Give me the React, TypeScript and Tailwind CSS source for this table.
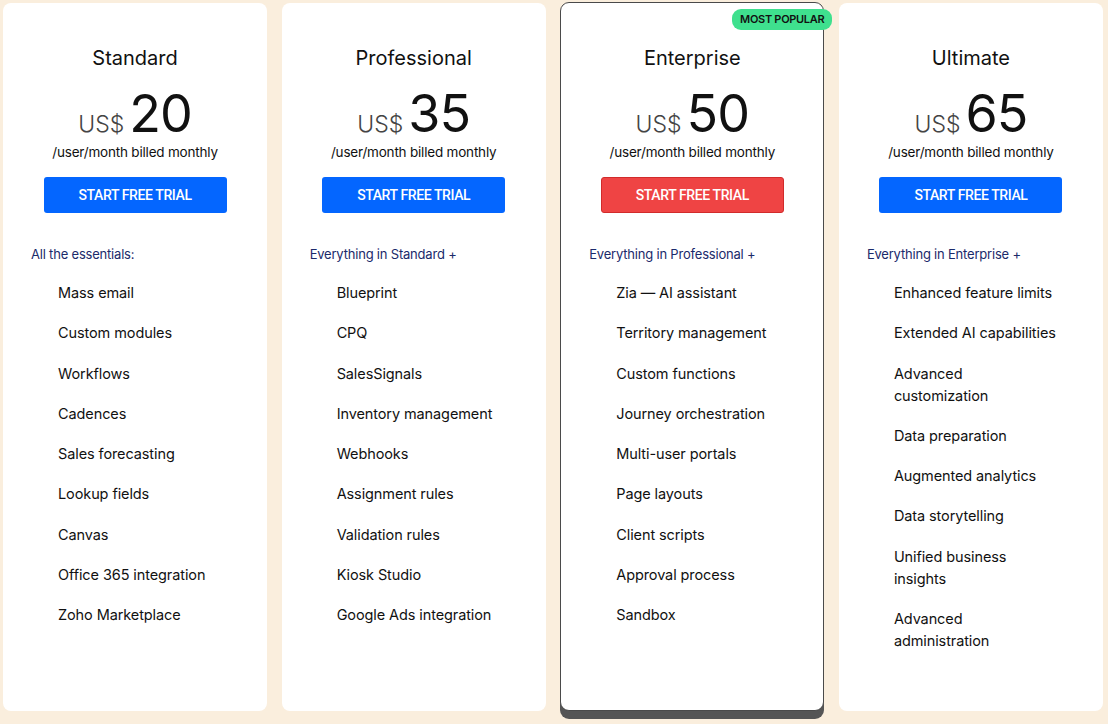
import React from 'react';

interface Plan {
  name: string;
  price: string;
  intro: string;
  features: string[];
  featured?: boolean;
}

const plans: Plan[] = [
  {
    name: 'Standard',
    price: '20',
    intro: 'All the essentials:',
    features: [
      'Mass email',
      'Custom modules',
      'Workflows',
      'Cadences',
      'Sales forecasting',
      'Lookup fields',
      'Canvas',
      'Office 365 integration',
      'Zoho Marketplace',
    ],
  },
  {
    name: 'Professional',
    price: '35',
    intro: 'Everything in Standard +',
    features: [
      'Blueprint',
      'CPQ',
      'SalesSignals',
      'Inventory management',
      'Webhooks',
      'Assignment rules',
      'Validation rules',
      'Kiosk Studio',
      'Google Ads integration',
    ],
  },
  {
    name: 'Enterprise',
    price: '50',
    intro: 'Everything in Professional +',
    featured: true,
    features: [
      'Zia — AI assistant',
      'Territory management',
      'Custom functions',
      'Journey orchestration',
      'Multi-user portals',
      'Page layouts',
      'Client scripts',
      'Approval process',
      'Sandbox',
    ],
  },
  {
    name: 'Ultimate',
    price: '65',
    intro: 'Everything in Enterprise +',
    features: [
      'Enhanced feature limits',
      'Extended AI capabilities',
      'Advanced\ncustomization',
      'Data preparation',
      'Augmented analytics',
      'Data storytelling',
      'Unified business\ninsights',
      'Advanced\nadministration',
    ],
  },
];

const PlanCard: React.FC<{ plan: Plan }> = ({ plan }) => {
  const featured = !!plan.featured;
  return (
    <div
      className={
        featured
          ? 'relative mt-[-1px] h-[709px] rounded-[9px] border border-[#4a4a4a] bg-white shadow-[0_8px_0_0_#555555] flex flex-col items-center pt-[42px]'
          : 'relative h-[708px] rounded-[8px] bg-white flex flex-col items-center pt-[42px]'
      }
    >
      {featured && (
        <div className="absolute top-[6px] right-[-9px] h-[21px] px-[8px] rounded-[9px] bg-[#3fe08e] flex items-center text-[11px] font-semibold tracking-[-0.3px] text-[#111]">
          MOST POPULAR
        </div>
      )}

      {/* Plan title + price */}
      <h2 className="text-[20px] leading-[26px] font-normal text-[#111]">{plan.name}</h2>
      <div className="mt-[14px] flex items-baseline h-[58px]">
        <span className="text-[23px] font-light text-[#444] mr-[5px]">US$</span>
        <span className="text-[52px] leading-[58px] font-normal text-[#111] tracking-[-1px]">{plan.price}</span>
      </div>
      <div className="mt-0 text-[13.5px] leading-[18px] text-[#111] tracking-[-0.2px]">
        /user/month billed monthly
      </div>
      <button
        className={
          featured
            ? 'mt-[16px] w-[183px] h-[36px] rounded-[3px] bg-[#ef4444] border border-[#d12b2b] text-white text-[14px] font-medium font-["Roboto"] tracking-[-0.4px]'
            : 'mt-[16px] w-[183px] h-[36px] rounded-[3px] bg-[#0466ff] text-white text-[14px] font-medium font-["Roboto"] tracking-[-0.4px]'
        }
      >
        START FREE TRIAL
      </button>

      {/* Features */}
      <div className="self-stretch px-[28px] mt-[32px]">
        <p className="text-[13px] leading-[18px] text-[#1b2a6b] tracking-[-0.2px]">{plan.intro}</p>
        <ul className="mt-[19px] pl-[27px] flex flex-col gap-[18.3px]">
          {plan.features.map((f) => (
            <li key={f} className="text-[14.5px] leading-[22px] text-[#111] whitespace-pre-line tracking-[-0.1px]">
              {f}
            </li>
          ))}
        </ul>
      </div>
    </div>
  );
};

export default function App() {
  return (
    <div
      className="w-[1108px] h-[724px] bg-[#faeedd] pl-[3px] pr-[5px] pt-[3px] overflow-hidden"
      style={{ fontFamily: 'Inter, "Noto Sans", sans-serif' }}
    >
      <div className="grid grid-cols-4 gap-[14.5px] items-start">
        {plans.map((p) => (
          <PlanCard key={p.name} plan={p} />
        ))}
      </div>
    </div>
  );
}
